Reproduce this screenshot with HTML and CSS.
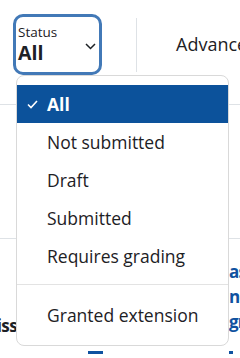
FILE: index.html
```html
<!DOCTYPE html>
<html>
<head>
<meta charset="utf-8">
<link rel="stylesheet" href="styles.css">
</head>
<body>
<div class="page">
  <div class="toolbar">
    <div class="status-btn">
      <div class="status-label">Status</div>
      <div class="status-value">All</div>
      <svg class="chev" width="11" height="7" viewBox="0 0 11 7"><path d="M1 1 L5.5 5.5 L10 1" fill="none" stroke="#1d2125" stroke-width="1.5"/></svg>
    </div>
    <div class="divider"></div>
    <div class="advanced">Advanced</div>
  </div>
  <div class="row-mid"></div>
  <div class="row-low">
    <div class="cell-left"><span>Permiss</span></div>
    <div class="cell-mid"><span class="bar"></span></div>
    <div class="cell-right"><div class="link">as<br>nc<br>gr</div><span class="bar"></span></div>
  </div>

  <div class="menu">
    <div class="item active"><svg class="check" width="11" height="9" viewBox="0 0 11 9"><path d="M1 4.5 L4 7.5 L10 1" fill="none" stroke="#fff" stroke-width="1.6"/></svg>All</div>
    <div class="item">Not submitted</div>
    <div class="item">Draft</div>
    <div class="item">Submitted</div>
    <div class="item">Requires grading</div>
    <div class="sep"></div>
    <div class="item">Granted extension</div>
  </div>
</div>
</body>
</html>
```

FILE: styles.css
```css
* { box-sizing: border-box; }
html, body { margin: 0; padding: 0; background: #fff; }
body { font-family: "Open Sans", "Noto Sans", sans-serif; color: #1d2125; }
.page { position: relative; width: 240px; height: 358px; overflow: hidden; }

.toolbar { display: flex; align-items: flex-start; height: 105px; border-bottom: 1px solid #dee2e6; }
.status-btn {
  position: relative;
  flex: none;
  margin: 14px 0 0 13px;
  width: 89px; height: 61px;
  border: 3px solid #4279b7;
  border-radius: 10px;
  padding: 7px 0 0 2px;
}
.status-label { font-size: 13.5px; line-height: 16px; }
.status-value { font-size: 19.5px; font-weight: 700; line-height: 24px; margin-top: 1px; }
.chev { position: absolute; left: 69px; top: 26px; }
.divider { flex: none; width: 1px; height: 54px; background: #dee2e6; margin: 18px 0 0 34px; }
.advanced { font-size: 18px; margin: 32px 0 0 39px; white-space: nowrap; }

.row-mid { height: 134px; border-bottom: 1px solid #dee2e6; }

.row-low { display: grid; grid-template-columns: 17px 1fr 11px; height: 119px; }
.cell-left { overflow: hidden; display: flex; justify-content: flex-end; padding-top: 75px; font-weight: 700; font-size: 17px; letter-spacing: -0.6px; line-height: 24px; }
.cell-left span { white-space: nowrap; flex: none; }
.cell-mid { position: relative; }
.cell-right { position: relative; overflow: hidden; padding-top: 20px; }
.link { color: #0f52a0; font-weight: 700; font-size: 17px; letter-spacing: -0.8px; line-height: 25px; white-space: nowrap; }
.bar { position: absolute; top: 112px; height: 3px; background: #0f52a0; }
.cell-mid .bar { left: 71px; width: 15px; }
.cell-right .bar { left: -9px; width: 13px; }

.menu {
  position: absolute;
  left: 16px; top: 75px;
  width: 213px; height: 271px;
  background: #fff;
  border: 1px solid #d9d9d9;
  border-radius: 8px;
  padding: 9px 0;
}
.item { height: 38px; display: flex; align-items: center; padding-left: 30px; font-size: 17.5px; white-space: nowrap; }
.item.active { background: #0c529b; color: #fff; font-weight: 700; padding-left: 10px; }
.check { margin-right: 9px; flex: none; }
.sep { height: 1px; background: #e3e3e3; margin: 9px 0 11px; }
```
